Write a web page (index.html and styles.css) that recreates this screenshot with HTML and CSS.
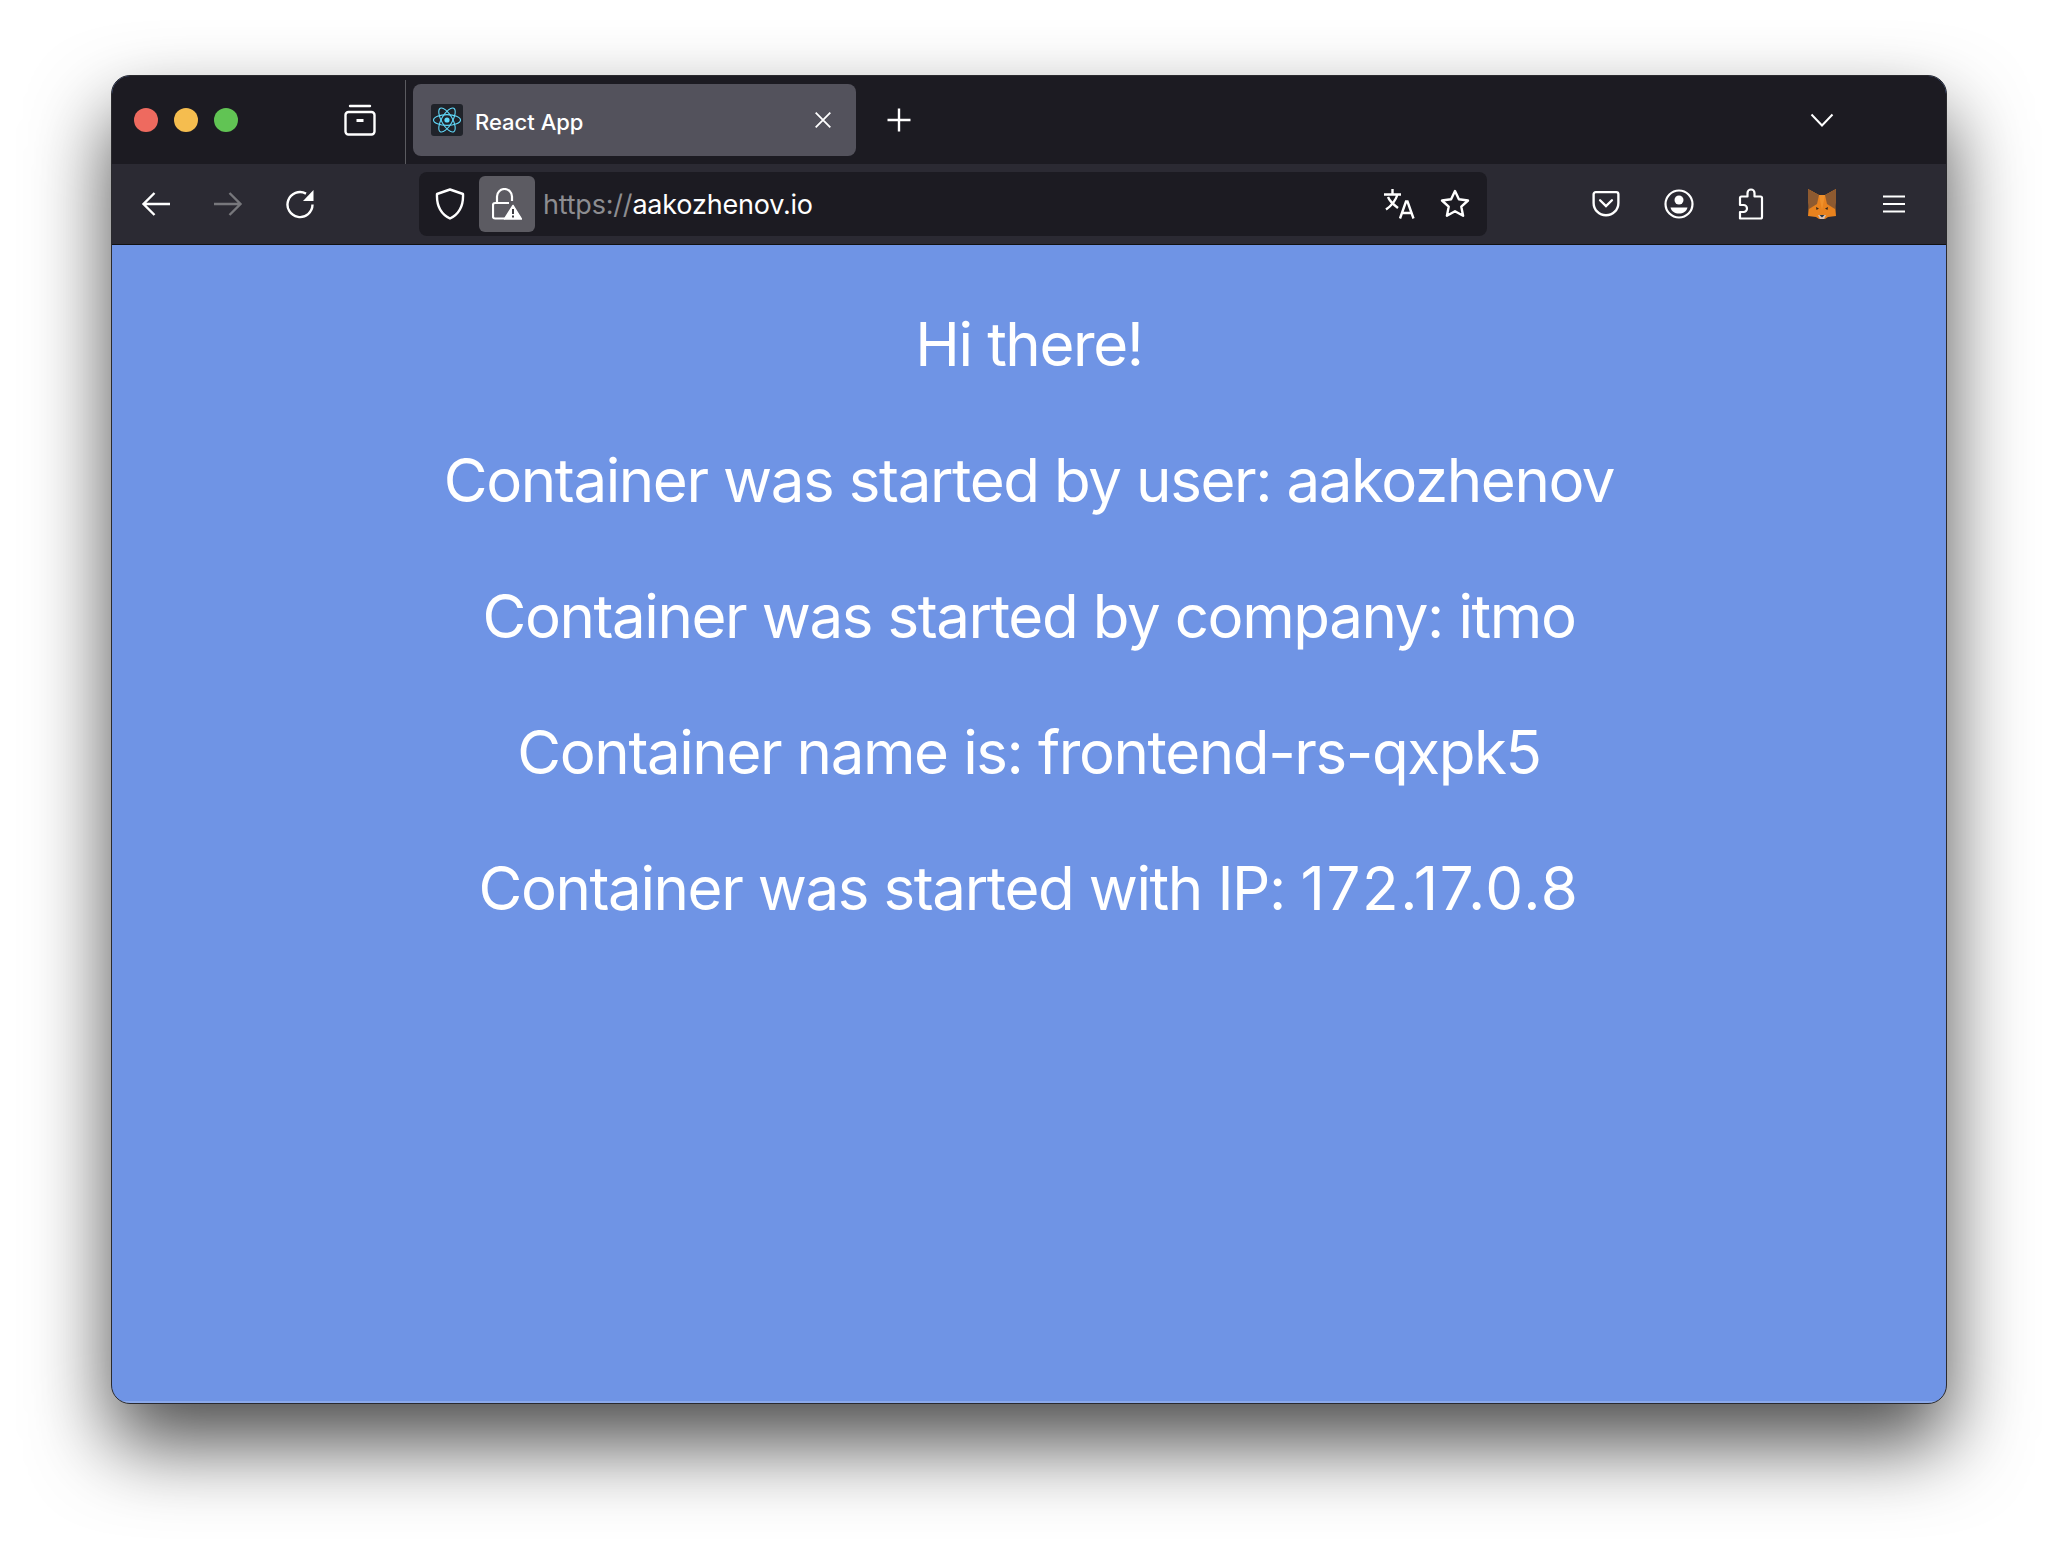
FILE: index.html
```html
<!DOCTYPE html>
<html lang="en">

<head>
    <meta charset="UTF-8">
    <title>React App</title>
    <link rel="stylesheet" href="styles.css">
</head>

<body>

    <div class="window">
        <div class="titlebar">
            <div class="lights">
                <span class="light red"></span>
                <span class="light yellow"></span>
                <span class="light green"></span>
            </div>
            <svg class="icon view-btn" viewBox="0 0 32 32" fill="none" stroke="#fff" stroke-width="2.4">
                <path d="M6 2h20" stroke-linecap="round" />
                <rect x="1.500" y="8" width="29" height="22.500" rx="3" />
                <path d="M12.500 16.500h7" stroke-width="2.800" />
            </svg>
            <div class="tab-sep"></div>
            <div class="tab">
                <div class="favicon">
                    <svg viewBox="0 0 32 32" fill="none" stroke="#61dafb" stroke-width="1.100">
                        <circle cx="16" cy="16" r="2.600" fill="#61dafb" stroke="none" />
                        <ellipse cx="16" cy="16" rx="13.500" ry="5.400" />
                        <ellipse cx="16" cy="16" rx="13.500" ry="5.400" transform="rotate(60 16 16)" />
                        <ellipse cx="16" cy="16" rx="13.500" ry="5.400" transform="rotate(120 16 16)" />
                    </svg>
                </div>
                <span class="tab-title">React App</span>
                <svg class="tab-close" viewBox="0 0 16 16" fill="none" stroke="#fff" stroke-width="1.600">
                    <path d="M1.500 1.500l13 13M14.500 1.500l-13 13" />
                </svg>
            </div>
            <svg class="icon new-tab" viewBox="0 0 26 26" fill="none" stroke="#fff" stroke-width="2.400">
                <path d="M13 1.500v23M1.500 13h23" />
            </svg>
            <svg class="icon tabs-menu" viewBox="0 0 24 14" fill="none" stroke="#fff" stroke-width="2">
                <path d="M1.500 1.500L12 12.500 22.500 1.500" />
            </svg>
        </div>

        <div class="toolbar">
            <div class="nav-btns">
                <svg class="icon nav-icon" viewBox="0 0 30 26" fill="none" stroke="#fff" stroke-width="2.400">
                    <path d="M29 13H3M13.500 2L2.500 13l11 11" />
                </svg>
                <svg class="icon nav-icon" viewBox="0 0 30 26" fill="none" stroke="#77777c" stroke-width="2.400">
                    <path d="M1 13h26M16.500 2l11 11-11 11" />
                </svg>
                <svg class="icon nav-icon reload" viewBox="0 0 30 30" fill="none" stroke="#fff" stroke-width="2.400">
                    <path d="M27.500 15.500A12.500 12.500 0 1 1 21 4.600" />
                    <path d="M28.500 1v11h-10.500z" fill="#fff" stroke="none" />
                </svg>
            </div>
            <div class="urlbar">
                <svg class="icon shield" viewBox="0 0 30 32" fill="none" stroke="#fff" stroke-width="2.400">
                    <path d="M15 1.500l13 4.500c.5 11-3 19.500-13 24.500C5 25.500 1.500 17 2 6z" stroke-linejoin="round" />
                </svg>
                <div class="lock-box">
                    <svg viewBox="0 0 30 32" fill="none">
                        <path d="M5 14V8.500a7.500 7.500 0 0 1 15 0V13" stroke="#fff" stroke-width="2.200" />
                        <path d="M13 30.500H3a2 2 0 0 1-2-2V17a2 2 0 0 1 2-2h14" stroke="#fff" stroke-width="2.200" />
                        <path d="M21 17.500L29.500 31h-17z" fill="#fff" stroke="#fff" stroke-width="1.500" stroke-linejoin="round" />
                        <path d="M21 21v5M21 27.500v2" stroke="#3d3d42" stroke-width="2" />
                    </svg>
                </div>
                <div class="url"><span class="url-scheme">https://</span>aakozhenov.io</div>
                <svg class="icon translate" viewBox="0 0 30 32" fill="none" stroke="#fff" stroke-width="2.400">
                    <path d="M0 6.500h17M8.500 1v5.500M13.500 6.500C11.500 13 7 18 2 21.500M4 9c2 5 6 8 10 11" />
                    <path d="M16 30.500L22 13.500h1.500l6 17M18.500 25h9" />
                </svg>
                <svg class="icon star" viewBox="0 0 30 30" fill="none" stroke="#fff" stroke-width="2.400">
                    <path d="M15 2l3.900 8.300 9.100 1.200-6.700 6.200 1.800 9-8.100-4.500-8.100 4.500 1.800-9L2 11.500l9.100-1.200z" stroke-linejoin="round" />
                </svg>
            </div>
            <div class="tools">
                <svg class="icon tool" viewBox="0 0 26 26" fill="none" stroke="#fff" stroke-width="2.200">
                    <path d="M3.500 2h19A2 2 0 0 1 24.500 4v8a11.500 11.500 0 0 1-23 0V4a2 2 0 0 1 2-2z" />
                    <path d="M7.500 9.500L13 15l5.500-5.500" stroke-linecap="round" />
                </svg>
                <svg class="icon tool account" viewBox="0 0 30 30" fill="none">
                    <circle cx="15" cy="15" r="13.500" stroke="#fff" stroke-width="2.200" />
                    <circle cx="15" cy="11" r="4.500" fill="#fff" />
                    <path d="M6.500 18.500h17c-1 4-4.500 6-8.500 6s-7.500-2-8.500-6z" fill="#fff" />
                </svg>
                <svg class="icon tool puzzle" viewBox="0 0 26 32" fill="none" stroke="#fff" stroke-width="2.200">
                    <path d="M2 30.500V24h3.500a3.500 3.500 0 0 0 0-7H2v-7a1.500 1.500 0 0 1 1.500-1.500h6V5a3.500 3.500 0 0 1 7 0v3.500h6A1.500 1.500 0 0 1 24 10v19a1.500 1.500 0 0 1-1.500 1.500z" stroke-linejoin="round" />
                </svg>
                <svg class="icon fox" viewBox="0 0 28 30">
                    <path d="M0 0l11 6h6L28 0l-1 14 1 13-8 1-3 2h-6l-3-2-8-1 1-13z" fill="#e8821e" />
                    <path d="M0 0l11 6-2 9-8 5-1-6z" fill="#8e5a30" />
                    <path d="M28 0L17 6l2 9 8 5 1-6z" fill="#8e5a30" />
                    <path d="M11 6h6l-3 15z" fill="#f0902a" />
                    <path d="M8 18l3 1.500L8.500 21zM20 18l-3 1.500 2.500 1.500z" fill="#33261c" />
                    <path d="M10 26h8l-2 4h-4z" fill="#d7c1b3" />
                    <path d="M11.500 26h5L14 28.500z" fill="#233447" />
                </svg>
                <svg class="icon tool menu" viewBox="0 0 24 20" fill="none" stroke="#fff" stroke-width="2.200">
                    <path d="M1 2.500h22M1 10h22M1 17.500h22" />
                </svg>
            </div>
        </div>

        <main class="content">
            <p>Hi there!</p>
            <p>Container was started by user: aakozhenov</p>
            <p>Container was started by company: itmo</p>
            <p>Container name is: frontend-rs-qxpk5</p>
            <p>Container was started with IP: <span class="ip">172.17.0.8</span></p>
        </main>
    </div>

</body>

</html>
```

FILE: styles.css
```css
html,
body {
    height: 100%;
}

body {
    margin: 0;
    background: #fff;
    font-family: Inter, 'Liberation Sans', sans-serif;
    overflow: hidden;
}

.window {
    box-sizing: border-box;
    width: 1836px;
    height: 1329px;
    margin: 75px 0 0 111px;
    display: flex;
    flex-direction: column;
    background: #6f94e5;
    border: 1px solid #2a2a2e;
    border-radius: 19px;
    box-shadow: 0 40px 80px rgba(0, 0, 0, 0.7);
    overflow: hidden;
}

.icon {
    display: block;
    flex: none;
}

.titlebar {
    height: 88px;
    flex: none;
    display: flex;
    align-items: center;
    background: #1c1b22;
}

.lights {
    display: flex;
    gap: 16px;
    margin-left: 22px;
    width: 187px;
}

.light {
    width: 24px;
    height: 24px;
    border-radius: 50%;
}

.red { background: #ee6a5f; }
.yellow { background: #f5bd4f; }
.green { background: #61c454; }

.view-btn {
    width: 32px;
    height: 32px;
    margin-left: 23px;
}

.tab-sep {
    width: 1px;
    height: 84px;
    margin: 4px 7px 0 29px;
    align-self: flex-start;
    background: #5b5b60;
}

.tab {
    width: 443px;
    height: 72px;
    display: flex;
    align-items: center;
    background: #53525c;
    border-radius: 8px;
    color: #fff;
    font-size: 22px;
    font-weight: 500;
}

.favicon {
    width: 32px;
    height: 32px;
    margin-left: 18px;
    background: #20232a;
    border-radius: 3px;
}

.favicon svg {
    display: block;
}

.tab-title {
    margin-left: 12px;
    padding-top: 3px;
    flex: 1;
}

.tab-close {
    width: 18px;
    height: 18px;
    margin-right: 24px;
}

.new-tab {
    width: 26px;
    height: 26px;
    margin-left: 30px;
}

.tabs-menu {
    width: 24px;
    height: 14px;
    margin-left: auto;
    margin-right: 112px;
}

.toolbar {
    height: 80px;
    flex: none;
    display: flex;
    align-items: center;
    background: #2b2a33;
    border-bottom: 1px solid #111;
}

.nav-btns {
    display: flex;
    align-items: center;
    gap: 42px;
    margin-left: 29px;
    width: 280px;
}

.nav-icon {
    width: 30px;
    height: 26px;
}

.reload {
    height: 30px;
}

.urlbar {
    width: 1068px;
    height: 64px;
    display: flex;
    align-items: center;
    background: #1c1b22;
    border-radius: 8px;
    margin-left: -2px;
}

.shield {
    width: 30px;
    height: 32px;
    margin-left: 16px;
}

.lock-box {
    width: 56px;
    height: 56px;
    margin-left: 14px;
    background: #5c5b62;
    border-radius: 6px;
    display: flex;
    align-items: center;
    justify-content: center;
}

.lock-box svg {
    width: 30px;
    height: 32px;
}

.url {
    margin-left: 8px;
    flex: 1;
    color: #fff;
    font-size: 27px;
    letter-spacing: -0.2px;
}

.url-scheme {
    color: #8d8d91;
}

.translate {
    width: 32px;
    height: 32px;
    margin-right: 25px;
}

.star {
    width: 30px;
    height: 30px;
    margin-right: 17px;
}

.tools {
    display: flex;
    align-items: center;
    gap: 44px;
    margin-left: 105px;
}

.tool {
    width: 28px;
    height: 28px;
}

.account {
    width: 30px;
    height: 30px;
}

.puzzle {
    width: 26px;
    height: 32px;
}

.fox {
    width: 28px;
    height: 30px;
}

.menu {
    width: 24px;
    height: 20px;
    margin-left: 2px;
}

.content {
    flex: 1;
    display: flex;
    flex-direction: column;
    align-items: center;
    padding-top: 63px;
    gap: 64px;
    color: #fff;
    font-size: 60px;
    line-height: 72px;
    letter-spacing: -1.4px;
    box-shadow: inset 0 -2px 0 rgba(255, 255, 255, 0.2);
}

.content p {
    margin: 0;
}

.ip {
    letter-spacing: 1.6px;
}
```
